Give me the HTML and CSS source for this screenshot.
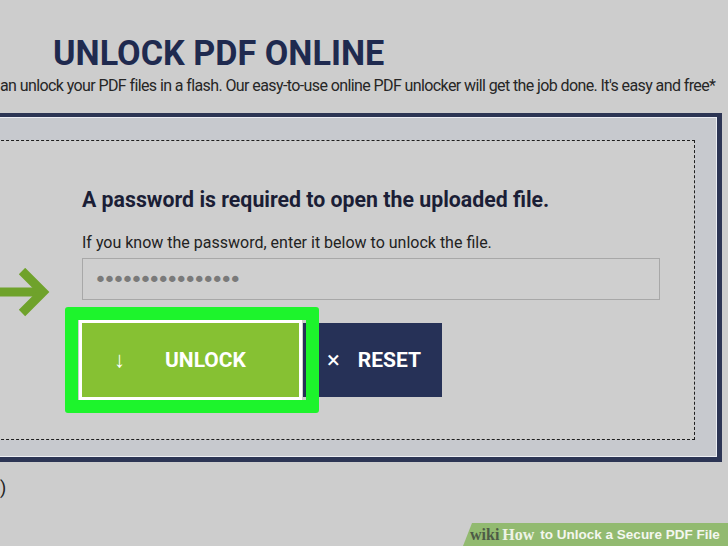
FILE: index.html
```html
<!DOCTYPE html>
<html lang="en">
    <head>
        <meta charset="UTF-8" />
        <title>Unlock PDF Online</title>
        <link rel="stylesheet" href="styles.css">
    </head>
    <body>
        <header class="intro">
            <h1 class="title">UNLOCK PDF ONLINE</h1>
            <p class="lede">an unlock your PDF files in a flash. Our easy-to-use online PDF unlocker will get the job done. It's easy and free*</p>
        </header>

        <main class="panel">
            <div class="dropzone">
                <div class="pointer">
                    <svg width="50" height="50" viewBox="0 0 50 50">
                        <path d="M0 24 H42" stroke="#6fa22b" stroke-width="9" fill="none" />
                        <path d="M22 3 L43 24 L22 45" stroke="#6fa22b" stroke-width="9" fill="none" />
                    </svg>
                </div>

                <form class="unlock-form" action="#" method="post">
                    <h2 class="form-title">A password is required to open the uploaded file.</h2>
                    <p class="hint">If you know the password, enter it below to unlock the file.</p>
                    <input type="password" class="pw" name="password" value="unlockme12345678" />

                    <div class="actions">
                        <span class="highlight"></span>
                        <button type="submit" class="btn btn-unlock"><span class="ico">&#8595;</span>UNLOCK</button>
                        <button type="reset" class="btn btn-reset"><span class="ico">&#215;</span>RESET</button>
                    </div>
                </form>
            </div>
        </main>

        <p class="note">)</p>

        <div class="wikihow">
            <span class="wiki">wiki</span><span class="how">How</span>
            <span class="caption">to Unlock a Secure PDF File</span>
        </div>
    </body>
</html>
```

FILE: styles.css
```css
body {
    font-family: Roboto, 'Liberation Sans', sans-serif;
    background: #cdcdcd;
    color: #222;
    margin: 0;
    height: 546px;
    overflow: hidden;
    position: relative;
}

.title {
    margin: 33px 0 0 53px;
    font-size: 34.2px;
    line-height: 40px;
    font-weight: 700;
    color: #1f2a4f;
}

.lede {
    margin: 3px 0 0;
    font-size: 16px;
    line-height: 20px;
    letter-spacing: -0.6px;
    white-space: nowrap;
    color: #262626;
}

.panel {
    margin: 17px 6px 0 -60px;
    border: solid #2c3554;
    border-width: 4px 5px 5px 4px;
    box-shadow: inset 0 0 0 1px #eceef3;
    background: #c7c9ce;
    padding: 23px 22px 17px 22px;
}

.dropzone {
    display: flex;
    border: 1px dashed #1e1e1e;
    background: #cecece;
    padding: 46px 0 42px;
}

.pointer {
    width: 82px;
    flex: none;
    padding: 81px 0 0 33px;
}

.pointer svg {
    display: block;
}

.unlock-form {
    width: 578px;
}

.form-title {
    margin: 0;
    font-size: 21.3px;
    line-height: 26px;
    font-weight: 700;
    color: #1b1e36;
}

.hint {
    margin: 20px 0 0;
    font-size: 16px;
    line-height: 20px;
}

.pw {
    display: block;
    box-sizing: border-box;
    width: 578px;
    height: 42px;
    margin-top: 5px;
    padding: 0 11px;
    border: 1px solid #a8a8a8;
    background: #cfcfcf;
    color: #7a7a7a;
    font-family: 'DejaVu Sans', sans-serif;
    font-size: 22px;
    letter-spacing: -4px;
}

.actions {
    position: relative;
    display: flex;
    gap: 4px;
    margin-top: 23px;
}

.btn {
    display: flex;
    align-items: center;
    height: 74px;
    border: 0;
    color: #fff;
    font-family: Roboto, sans-serif;
    font-size: 21px;
    font-weight: 700;
}

.btn-unlock {
    width: 217px;
    padding: 0 0 0 32px;
    background: #86c133;
    outline: 3px solid #fff;
}

.btn-unlock .ico {
    margin-right: 40px;
    font-size: 22px;
}

.btn-reset {
    width: 139px;
    padding: 0 0 0 24px;
    background: #263157;
}

.btn-reset .ico {
    margin-right: 18px;
    font-size: 24px;
    font-weight: 400;
}

/* annotation ring round the unlock button */
.highlight {
    position: absolute;
    left: -17px;
    top: -16px;
    width: 228px;
    height: 80px;
    border: 13px solid #1df42c;
    border-radius: 3px;
}

.note {
    margin: 14px 0 0;
    font-size: 18px;
    line-height: 24px;
}

.wikihow {
    position: absolute;
    right: 0;
    bottom: 0;
    width: 258px;
    height: 23px;
    padding-left: 7px;
    display: flex;
    align-items: center;
    background: #92ba70;
    clip-path: polygon(9px 0, 100% 0, 100% 100%, 0 100%);
    white-space: nowrap;
}

.wiki,
.how {
    font-family: 'Liberation Serif', serif;
    font-weight: 700;
    font-size: 16px;
}

.wiki {
    color: #4d5b46;
    margin-right: 3px;
}

.how {
    color: #eef3e6;
}

.caption {
    margin-left: 6px;
    font-family: 'Liberation Sans', sans-serif;
    font-weight: 700;
    font-size: 13.5px;
    color: #f4f7ef;
}
```
